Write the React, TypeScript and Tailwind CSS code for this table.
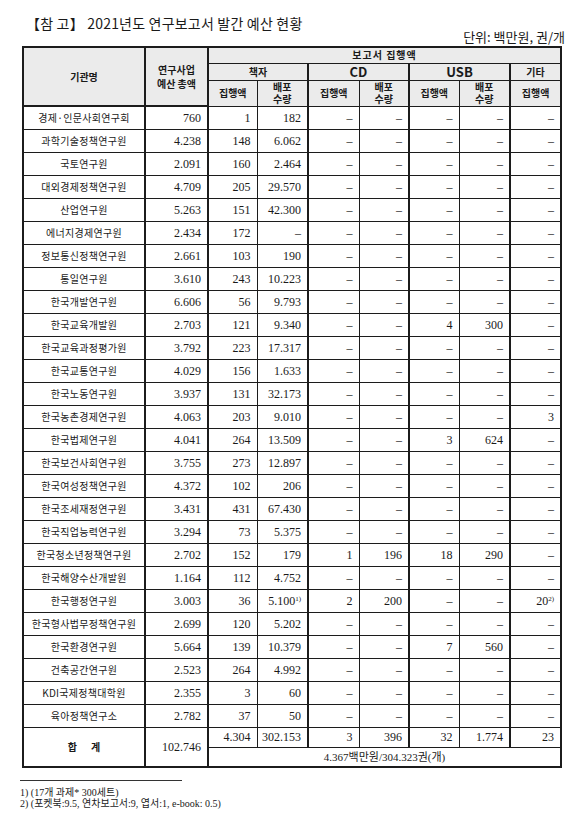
const rows: string[][] = [
  ["경제·인문사회연구회", "760", "1", "182", "–", "–", "–", "–", "–"],
  ["과학기술정책연구원", "4.238", "148", "6.062", "–", "–", "–", "–", "–"],
  ["국토연구원", "2.091", "160", "2.464", "–", "–", "–", "–", "–"],
  ["대외경제정책연구원", "4.709", "205", "29.570", "–", "–", "–", "–", "–"],
  ["산업연구원", "5.263", "151", "42.300", "–", "–", "–", "–", "–"],
  ["에너지경제연구원", "2.434", "172", "–", "–", "–", "–", "–", "–"],
  ["정보통신정책연구원", "2.661", "103", "190", "–", "–", "–", "–", "–"],
  ["통일연구원", "3.610", "243", "10.223", "–", "–", "–", "–", "–"],
  ["한국개발연구원", "6.606", "56", "9.793", "–", "–", "–", "–", "–"],
  ["한국교육개발원", "2.703", "121", "9.340", "–", "–", "4", "300", "–"],
  ["한국교육과정평가원", "3.792", "223", "17.317", "–", "–", "–", "–", "–"],
  ["한국교통연구원", "4.029", "156", "1.633", "–", "–", "–", "–", "–"],
  ["한국노동연구원", "3.937", "131", "32.173", "–", "–", "–", "–", "–"],
  ["한국농촌경제연구원", "4.063", "203", "9.010", "–", "–", "–", "–", "3"],
  ["한국법제연구원", "4.041", "264", "13.509", "–", "–", "3", "624", "–"],
  ["한국보건사회연구원", "3.755", "273", "12.897", "–", "–", "–", "–", "–"],
  ["한국여성정책연구원", "4.372", "102", "206", "–", "–", "–", "–", "–"],
  ["한국조세재정연구원", "3.431", "431", "67.430", "–", "–", "–", "–", "–"],
  ["한국직업능력연구원", "3.294", "73", "5.375", "–", "–", "–", "–", "–"],
  ["한국청소년정책연구원", "2.702", "152", "179", "1", "196", "18", "290", "–"],
  ["한국해양수산개발원", "1.164", "112", "4.752", "–", "–", "–", "–", "–"],
  ["한국행정연구원", "3.003", "36", "5.100|1)", "2", "200", "–", "–", "20|2)"],
  ["한국형사법무정책연구원", "2.699", "120", "5.202", "–", "–", "–", "–", "–"],
  ["한국환경연구원", "5.664", "139", "10.379", "–", "–", "7", "560", "–"],
  ["건축공간연구원", "2.523", "264", "4.992", "–", "–", "–", "–", "–"],
  ["KDI국제정책대학원", "2.355", "3", "60", "–", "–", "–", "–", "–"],
  ["육아정책연구소", "2.782", "37", "50", "–", "–", "–", "–", "–"],
];

const totals = ["4.304", "302.153", "3", "396", "32", "1.774", "23"];

const kr = "font-['Noto_Sans_CJK_KR',sans-serif]";
const serif = "font-['Liberation_Serif','Noto_Sans_CJK_KR',serif]";
const cell = "border border-[#1c1c1c] p-0";
const th = `${cell} bg-[#ebebeb] text-[10px] font-bold leading-[12px] text-[#1a1a1a] text-center align-middle ${kr}`;

function Num({ v }: { v: string }) {
  const [main, sup] = v.split("|");
  return (
    <>
      {main}
      {sup && <sup className="text-[7px] leading-none">{sup}</sup>}
    </>
  );
}

export default function App() {
  return (
    <div className="min-h-[829px] w-[580px] bg-white pl-[22px] pt-[14px] text-[#1a1a1a]">
      <h1 className={`pl-[4px] text-[14px] font-normal leading-[18px] tracking-[0.2px] ${kr}`}>
        【참 고】 2021년도 연구보고서 발간 예산 현황
      </h1>
      <div className={`-mt-[2px] mb-[2px] pr-[15px] text-right text-[13px] leading-[14px] ${kr}`}>
        단위: 백만원, 권/개
      </div>
      <table className="w-[538px] table-fixed border-collapse border-2 border-[#1c1c1c]">
        <colgroup>
          <col className="w-[122px]" />
          <col className="w-[63px]" />
          <col className="w-[49px]" />
          <col className="w-[51px]" />
          <col className="w-[51px]" />
          <col className="w-[50px]" />
          <col className="w-[50px]" />
          <col className="w-[51px]" />
          <col className="w-[51px]" />
        </colgroup>
        <thead>
          <tr className="h-[16px]">
            <th rowSpan={3} className={`${th} border-2`}>기관명</th>
            <th rowSpan={3} className={`${th} border-2 leading-[14px]`}>
              연구사업
              <br />
              예산 총액
            </th>
            <th colSpan={7} className={`${th} tracking-[1px]`}>보고서 집행액</th>
          </tr>
          <tr className="h-[17px]">
            <th colSpan={2} className={`${th} border-r-2`}>책자</th>
            <th colSpan={2} className={`${th} border-r-2 ${serif} text-[13px]`}>CD</th>
            <th colSpan={2} className={`${th} border-r-2 ${serif} text-[13px]`}>USB</th>
            <th className={th}>기타</th>
          </tr>
          <tr className="h-[26px]">
            {["집행액", "배포|수량", "집행액", "배포|수량", "집행액", "배포|수량", "집행액"].map((t, i) => (
              <th key={i} className={`${th} ${i % 2 === 1 ? "border-r-2 text-[8.5px] leading-[12.4px]" : ""}`}>
                {t.includes("|") ? (
                  <>
                    {t.split("|")[0]}
                    <br />
                    {t.split("|")[1]}
                  </>
                ) : (
                  t
                )}
              </th>
            ))}
          </tr>
        </thead>
        <tbody>
          {rows.map((r) => (
            <tr key={r[0]} className="h-[23px]">
              <td className={`${cell} border-r-2 text-center text-[10px] tracking-[0.3px] ${kr}`}>{r[0]}</td>
              {r.slice(1).map((v, i) => (
                <td
                  key={i}
                  className={`${cell} pr-[6px] text-right text-[12px] ${serif} ${
                    i === 0 || i === 2 || i === 4 || i === 6 ? "border-r-2" : ""
                  }`}
                >
                  <Num v={v} />
                </td>
              ))}
            </tr>
          ))}
          <tr className="h-[20px]">
            <td rowSpan={2} className={`${cell} border-r-2 text-center text-[10px] font-bold ${kr}`}>
              합<span className="inline-block w-[14px]" />계
            </td>
            <td rowSpan={2} className={`${cell} border-r-2 pr-[6px] text-right text-[12px] ${serif}`}>102.746</td>
            {totals.map((v, i) => (
              <td
                key={i}
                className={`${cell} pr-[6px] text-right text-[12px] ${serif} ${
                  i === 1 || i === 3 || i === 5 ? "border-r-2" : ""
                }`}
              >
                {v}
              </td>
            ))}
          </tr>
          <tr className="h-[20px]">
            <td colSpan={7} className={`${cell} text-center text-[11px] ${serif}`}>
              4.367백만원/304.323권(개)
            </td>
          </tr>
        </tbody>
      </table>
      <div className="-ml-[2px] mt-[12px] h-px w-[162px] bg-[#333]" />
      <div className={`-ml-[2px] mt-[6px] text-[10px] leading-[11px] ${serif}`}>
        <p>1) (17개 과제* 300세트)</p>
        <p>2) (포켓북:9.5, 연차보고서:9, 엽서:1, e-book: 0.5)</p>
      </div>
    </div>
  );
}
